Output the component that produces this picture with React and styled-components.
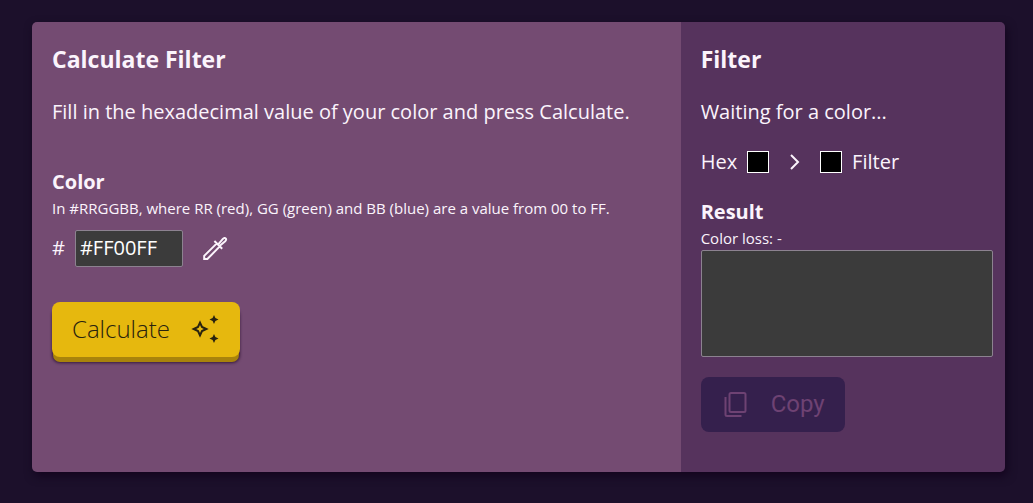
import React, { useState } from "react";
import styled, { createGlobalStyle } from "styled-components";

const GlobalStyle = createGlobalStyle`
  *, *::before, *::after { box-sizing: border-box; }
  body {
    margin: 0;
    background: #1c102b;
    color: #fbf4fc;
    font: 400 20px/30px "Open Sans", sans-serif;
  }
  button, input, textarea { font: inherit; }
`;

const Page = styled.main`
  padding: 22px 28px 31px 32px;
`;

const Card = styled.div`
  display: grid;
  grid-template-columns: 2fr 1fr;
  min-height: 450px;
  border-radius: 5px;
  overflow: hidden;
  box-shadow: 2px 4px 10px rgba(16, 0, 26, 0.8);
`;

const Panel = styled.section`
  padding: 20px;
  padding-right: ${(p) => (p.$side ? "12px" : "20px")};
  background: ${(p) => (p.$side ? "#56335d" : "#744b72")};
`;

const Title = styled.h2`
  margin: 0;
  font-size: 23px;
  line-height: 34px;
  font-weight: 700;
`;

const Text = styled.p`
  margin: 21px 0 20px;
`;

const Field = styled.div`
  margin-top: ${(p) => p.$top}px;
`;

const Label = styled.label`
  display: block;
  font-weight: 700;
  line-height: 30px;
`;

const Hint = styled.small`
  display: block;
  margin-bottom: 1px;
  font-size: 15px;
  line-height: 22px;
`;

const ColorRow = styled.div`
  display: flex;
  align-items: center;
  gap: 10px;
  margin-top: 11px;
`;

const Hash = styled.span`
  padding-bottom: 2px;
`;

const HexInput = styled.input`
  width: 108px;
  height: 37px;
  padding: 0 4px 2px;
  border: 1px solid #8c8290;
  border-radius: 2px;
  background: #3b3b3b;
  color: #fff;
  outline: none;
`;

const PickerButton = styled.button`
  display: flex;
  padding: 0 0 2px;
  margin-left: 9px;
  border: 0;
  background: none;
  color: inherit;
  cursor: pointer;
`;

const ActionButton = styled.button`
  display: flex;
  align-items: center;
  gap: 20px;
  height: 55px;
  padding: 0 20px 2px;
  border: 0;
  border-radius: 8px;
  font-size: 24px;
  cursor: pointer;
`;

const CalculateButton = styled(ActionButton)`
  margin-top: 35px;
  background: #e6b80e;
  color: #29230f;
  font-weight: 300;
  box-shadow: 0 6px 0 -1px #a8830c, 0 6px 3px rgba(30, 5, 40, 0.7);
`;

const CopyButton = styled(ActionButton)`
  margin-top: 20px;
  background: #35204d;
  color: #6e4273;
  font-family: Roboto, sans-serif;
  font-weight: 400;
  cursor: default;
`;

const Compare = styled.div`
  display: flex;
  align-items: center;
  gap: 10px;
`;

const Swatch = styled.span`
  width: 22px;
  height: 22px;
  border: 1px solid #fff;
  background: #000;
`;

const Result = styled.textarea`
  display: block;
  width: 100%;
  height: 107px;
  border: 1px solid #8c8290;
  border-radius: 2px;
  background: #3b3b3b;
  color: #fff;
  resize: none;
  outline: none;
`;

const Svg = styled.svg`
  display: block;
  flex: none;
  fill: none;
  stroke: currentColor;
  stroke-width: 2;
`;

const PickerIcon = () => (
  <Svg width="26" height="26" viewBox="0 0 26 26" aria-hidden="true">
    <path d="M14.8 8.4 2.2 20.8V24h3.2L17.8 11.4M12.4 6l7.8 7.8M16 9.6l4.9-5.7c1-1.2 2.2-1.2 2.8-.5.7.7.6 1.8-.5 2.8l-5.7 4.9" />
  </Svg>
);

const SparkleIcon = () => (
  <Svg width="30" height="30" viewBox="0 0 30 30" aria-hidden="true">
    <path d="M10 8.7 12 13l4.300 2-4.300 2-2 4.300L8 17l-4.300-2L8 13z" />
    <path
      fill="currentColor"
      stroke="none"
      d="m24 1 1.400 3.100 3.100 1.400-3.100 1.400L24 10l-1.400-3.100-3.100-1.400 3.100-1.400zM24 20l1.400 3.100 3.100 1.400-3.100 1.400L24 29l-1.400-3.100-3.100-1.400 3.100-1.400z"
    />
  </Svg>
);

const ChevronIcon = () => (
  <Svg width="31" height="24" viewBox="0 0 31 24" aria-hidden="true">
    <path d="m12 5 7 7-7 7" />
  </Svg>
);

const CopyIcon = () => (
  <Svg width="30" height="30" viewBox="0 0 30 30" aria-hidden="true">
    <rect x="8.500" y="4" width="16" height="19" rx="1.500" />
    <path d="M4.500 8v17.500c0 .900.600 1.500 1.500 1.500H20.500" />
  </Svg>
);

export default function App() {
  const [hex, setHex] = useState("#FF00FF");
  return (
    <>
      <GlobalStyle />
      <Page>
        <Card>
          <Panel>
            <Title>Calculate Filter</Title>
            <Text>Fill in the hexadecimal value of your color and press Calculate.</Text>
            <Field $top={40}>
              <Label htmlFor="hex">Color</Label>
              <Hint>In #RRGGBB, where RR (red), GG (green) and BB (blue) are a value from 00 to FF.</Hint>
              <ColorRow>
                <Hash>#</Hash>
                <HexInput id="hex" value={hex} onChange={(e) => setHex(e.target.value)} />
                <PickerButton type="button" aria-label="Pick a color">
                  <PickerIcon />
                </PickerButton>
              </ColorRow>
            </Field>
            <CalculateButton type="button">
              Calculate
              <SparkleIcon />
            </CalculateButton>
          </Panel>
          <Panel $side>
            <Title>Filter</Title>
            <Text>Waiting for a color...</Text>
            <Compare>
              <span>Hex</span>
              <Swatch />
              <ChevronIcon />
              <Swatch />
              <span>Filter</span>
            </Compare>
            <Field $top={20}>
              <Label htmlFor="result">Result</Label>
              <Hint>Color loss: -</Hint>
              <Result id="result" readOnly />
            </Field>
            <CopyButton type="button" aria-disabled="true">
              <CopyIcon />
              Copy
            </CopyButton>
          </Panel>
        </Card>
      </Page>
    </>
  );
}
